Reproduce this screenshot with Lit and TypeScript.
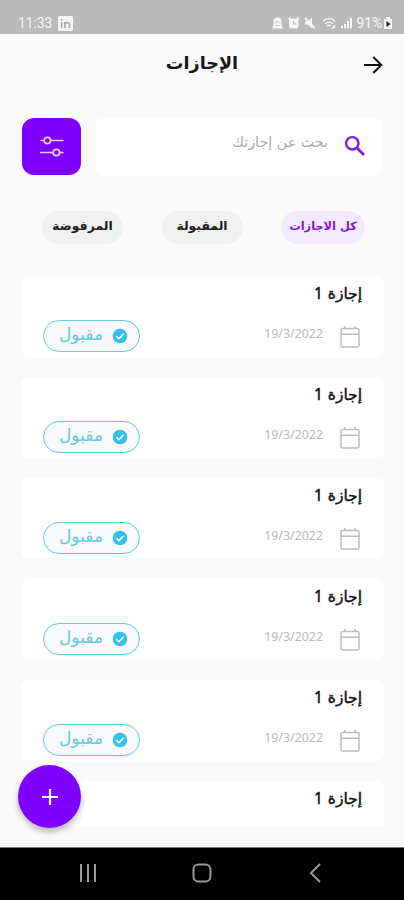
import { LitElement, html, css, svg, nothing } from "lit";
import { customElement, property } from "lit/decorators.js";

@customElement("leave-card")
class LeaveCard extends LitElement {
  @property({ type: Boolean, reflect: true }) collapsed = false;

  static styles = css`
    :host { display: block; height: 81px; flex: none; background: #fff; border-radius: 8px; direction: rtl; box-sizing: border-box; padding: 4px 22px 0 22px; }
    :host([collapsed]) { height: 46px; border-radius: 8px 8px 0 0; }
    .title { font-size: 15.5px; line-height: 26px; height: 26px; color: #111; font-weight: 400; -webkit-text-stroke: 0.45px #111; white-space: nowrap; }
    .title .num { font-family: "Noto Sans", sans-serif; }
    .row { display: flex; align-items: center; height: 32px; margin-top: 14px; }
    .cal { width: 22px; height: 24px; margin: 2px 1px 0 0; }
    .date { font-family: "Noto Sans", sans-serif; font-size: 12.4px; line-height: 16px; color: #b9b9b9; margin: 0 16px 4px 0; direction: ltr; white-space: nowrap; }
    .pill { margin-right: auto; box-sizing: border-box; width: 97px; height: 32px; border: 1.5px solid #62cbe2; border-radius: 16px; background: #f8f9fa; display: flex; align-items: center; padding: 0 11px 0 0; }
    .check { width: 16px; height: 16px; flex: none; }
    .state { color: #62c9df; font-size: 17px; line-height: 22px; margin: 0 9px 5px 0; white-space: nowrap; }
  `;
  render() {
    return html`
      <div class="title">إجازة <span class="num">1</span></div>
      ${this.collapsed ? nothing : html`<div class="row">
        <svg class="cal" viewBox="0 0 22 24" fill="none" stroke="#bcbcbc" stroke-width="1.5">
          <rect x="2" y="3.5" width="18" height="18.5" rx="1.5" /><path d="M2 9.2H20M5.8 1v3M16.2 1v3" />
        </svg>
        <span class="date">19/3/2022</span>
        <div class="pill">
          <svg class="check" viewBox="0 0 16 16"><circle cx="8" cy="8" r="7.3" fill="#35bfec" /><path d="M4.4 8.2l2.5 2.5 4.8-5" fill="none" stroke="#fff" stroke-width="1.6" /></svg>
          <span class="state">مقبول</span>
        </div>
      </div>`}`;
  }
}

@customElement("app-root")
class AppRoot extends LitElement {
  static styles = css`
    :host { display: flex; flex-direction: column; position: relative; width: 404px; height: 900px; overflow: hidden; background: #fafafa; font-family: "DejaVu Sans", sans-serif; }
    .status { height: 34px; flex: none; box-sizing: border-box; background: #bababa; color: #f6f6f6; display: flex; align-items: flex-end; padding: 0 12px 3px 18px; font-family: Roboto, sans-serif; font-size: 13.8px; line-height: 16px; }
    .status .in { width: 15px; height: 15px; margin: 0 auto 0 6px; }
    .status .tray { width: 82px; height: 14px; margin: 0 2px 1px 0; }
    .status .bat { width: 8px; height: 12px; margin: 0 0 2px 2px; }
    .header { height: 60px; flex: none; display: grid; grid-template-columns: 1fr auto 1fr; align-items: center; padding: 0 21px 0 21px; direction: ltr; }
    .header .name { grid-column: 2; font-size: 17.6px; font-weight: 700; line-height: 24px; color: #161616; direction: rtl; margin-bottom: 3px; white-space: nowrap; }
    .header svg { width: 20px; height: 20px; justify-self: end; margin-top: 2px; }
    .search { display: flex; height: 58px; flex: none; margin: 24px 22px 0; gap: 15px; }
    .filter { width: 59px; height: 57px; box-sizing: border-box; border-radius: 12px; background: #8000ff; padding: 16px 17px; }
    .filter svg { display: block; width: 25px; height: 25px; }
    .field { flex: 1; background: #fff; border-radius: 8px; direction: rtl; display: flex; align-items: center; padding: 0 16px 2px 0; }
    .field svg { width: 22px; height: 22px; }
    .field span { color: #aaa; font-size: 14.3px; line-height: 20px; margin: 0 16px 8px 0; white-space: nowrap; }
    .chips { height: 33px; flex: none; display: flex; justify-content: space-between; margin: 35px 39px 0 42px; }
    .chip { width: 81px; border-radius: 17px; background: #eff1f1; color: #202020; font-size: 12.4px; font-weight: 700; line-height: 30px; text-align: center; direction: rtl; white-space: nowrap; }
    .chip.on { width: 84px; background: #f1eafc; color: #8417d8; font-size: 11.4px; }
    .list { flex: none; height: 550px; display: flex; flex-direction: column; gap: 20px; overflow: hidden; margin: 32px 20px 0 21px; }
    .fab { position: absolute; left: 18px; top: 765px; width: 63px; height: 63px; border-radius: 50%; background: #8000ff; box-shadow: 0 4px 6px rgba(0,0,0,.28); display: grid; place-items: center; }
    .fab svg { width: 18px; height: 18px; }
    .nav { flex: none; height: 53px; margin-top: auto; background: #000; border-top: 1px solid #777; box-sizing: border-box; display: flex; justify-content: space-between; align-items: center; padding: 0 78px 2px; }
    .nav svg { width: 20px; height: 20px; }
  `;
  render() {
    const line = (d: string) => svg`<path d=${d} fill="none" stroke="#999" stroke-width="2" />`;
    return html`
      <div class="status">
        <span>11:33</span>
        <svg class="in" viewBox="0 0 15 15"><rect width="15" height="15" rx="1.5" fill="#f6f6f6" /><path d="M3.6 6v6M3.6 3v1.6M6.8 12V6M6.8 9c0-3 4.6-3.3 4.6 0v3" fill="none" stroke="#aaa" stroke-width="1.7" /></svg>
        <svg class="tray" viewBox="0 0 82 14" fill="none" stroke="#f6f6f6">
          <path d="M1.5 5.5a4 4 0 0 1 8 0v2.5l1.2 4.5H.4L1.5 8z" fill="#f6f6f6" stroke="none" /><path d="M3.5 6h4M3.5 9.5h4" stroke="#bababa" />
          <rect x="17" y="2.5" width="9.5" height="10" rx="3" fill="#f6f6f6" stroke="none" /><path d="M16.5 3.5l2-2M27 3.5l-2-2" stroke-width="1.5" /><path d="M21.7 5v3h2.5" stroke="#aaa" />
          <path d="M33 5.5h3l4-4v11l-4-4h-3z" fill="#f6f6f6" stroke="none" /><path d="M33 2l9.5 10" stroke-width="2" />
          <path d="M51 5q6-5 12 0M53 7.7q4-3.3 8 0M55 10q2-1.7 4 0" stroke-width="1.3" /><path d="M60 12.5l2-2M62.5 9v3" stroke-width="1.2" />
          <path d="M70 12.5V10M73 12.5V8M76 12.5V5M79 12.5V2" stroke-width="2" />
        </svg>
        <span>91%</span>
        <svg class="bat" viewBox="0 0 8 12"><path d="M0 2h2V0h4v2h2v10H0z" fill="#f6f6f6" /><path d="M2.5 4l4 3-4 3z" fill="#222" /></svg>
      </div>
      <div class="header">
        <span class="name">الإجازات</span>
        <svg viewBox="0 0 20 20" fill="none" stroke="#111" stroke-width="2"><path d="M1 10H18M10.3 2l8 8-8 8" /></svg>
      </div>
      <div class="search">
        <div class="filter">
          <svg viewBox="0 0 25 25" fill="none" stroke="#edcfff" stroke-width="1.7"><path d="M1.5 6.5H5M12 6.5H24.5M1 18.5H14M21 18.5H24.5" /><circle cx="8.4" cy="6.5" r="3.2" /><circle cx="17.4" cy="18.5" r="3.2" /></svg>
        </div>
        <div class="field">
          <svg viewBox="0 0 22 22" fill="none" stroke="#8417dc" stroke-width="2.4"><circle cx="8.3" cy="8.3" r="6.2" /><path d="M12.8 12.8L20 20" stroke-width="2.8" /></svg>
          <span>بحث عن إجازتك</span>
        </div>
      </div>
      <div class="chips">
        <div class="chip">المرفوضة</div>
        <div class="chip">المقبولة</div>
        <div class="chip on">كل الاجازات</div>
      </div>
      <div class="list">${[0, 1, 2, 3, 4, 5].map((i) => html`<leave-card ?collapsed=${i === 5}></leave-card>`)}</div>
      <div class="fab"><svg viewBox="0 0 18 18" stroke="#fff" stroke-width="2.2"><path d="M9 1v16M1 9h16" /></svg></div>
      <div class="nav">
        <svg viewBox="0 0 20 20">${line("M3 1v18M10 1v18M17 1v18")}</svg>
        <svg viewBox="0 0 20 20"><rect x="1.5" y="1.5" width="17" height="17" rx="5" fill="none" stroke="#999" stroke-width="2" /></svg>
        <svg viewBox="0 0 20 20">${line("M14 1L5 10l9 9")}</svg>
      </div>`;
  }
}
